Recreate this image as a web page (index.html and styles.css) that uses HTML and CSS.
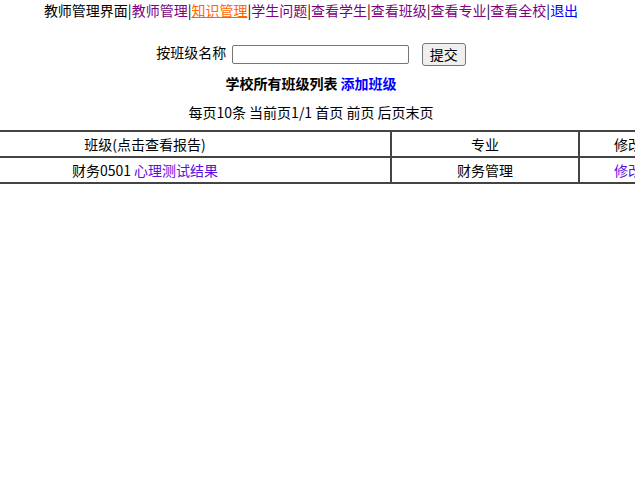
FILE: index.html
```html
<!DOCTYPE html>
<html lang="zh-CN">
<head>
    <meta charset="UTF-8">
    <title>教师管理界面</title>
    <link rel="stylesheet" href="styles.css">
</head>
<body>
    <div class="page">
        <div class="nav">教师管理界面|<a class="visited" href="#">教师管理</a>|<a class="current" href="#">知识管理</a>|<a class="visited" href="#">学生问题</a>|<a class="visited" href="#">查看学生</a>|<a class="visited" href="#">查看班级</a>|<a class="visited" href="#">查看专业</a>|<a class="visited" href="#">查看全校</a>|<a class="plain" href="#">退出</a></div>

        <form class="search">
            按班级名称 <input type="text" class="search-input"> <button type="button" class="search-btn">提交</button>
        </form>

        <div class="title"><b>学校所有班级列表</b> <a class="add" href="#">添加班级</a></div>

        <div class="pager">每页10条 当前页1/1 首页 前页 后页末页</div>
    </div>

    <table class="list">
        <tr>
            <td class="col-class">班级(点击查看报告)</td>
            <td class="col-major">专业</td>
            <td class="col-edit">修改</td>
        </tr>
        <tr>
            <td>财务0501 <a class="report" href="#">心理测试结果</a></td>
            <td>财务管理</td>
            <td><a class="report" href="#">修改</a></td>
        </tr>
    </table>
</body>
</html>
```

FILE: styles.css
```css
html { overflow: hidden; }
body { margin: 0; font-family: "Noto Sans CJK SC", sans-serif; font-size: 14px; color: #000; background: #fff; }
a { text-decoration: none; }
.page { width: 622px; text-align: center; }
.nav { height: 20px; line-height: 20px; }
.nav a.visited { color: #800080; }
.nav a.current { color: #ff6600; text-decoration: underline; }
.nav a.plain { color: #0000ff; }
.search { margin: 20px 0 0; height: 24px; line-height: 24px; }
.search-input { width: 175px; height: 17px; padding: 0; margin: 0 6px 0 2px; border: 1px solid #767676; border-radius: 2px; vertical-align: middle; font-size: 14px; }
.search-btn { height: 23px; padding: 0 7px; font-family: inherit; font-size: 14px; background: #efefef; border: 1px solid #767676; border-radius: 3px; vertical-align: middle; margin-left: 4px; }
.title { margin-top: 9px; height: 20px; line-height: 20px; }
.title .add { color: #0000ff; font-weight: bold; }
.pager { margin-top: 9px; height: 20px; line-height: 20px; }
.list { width: 778px; table-layout: fixed; margin: 8px 0 0 -102px; border-collapse: collapse; }
.list td { border: 2px solid #444; height: 24px; padding: 0; text-align: center; line-height: 22px; }
.col-class { width: 490px; }
.col-major { width: 186px; }
.col-edit { width: 96px; }
.report { color: #5a10e0; }
```
